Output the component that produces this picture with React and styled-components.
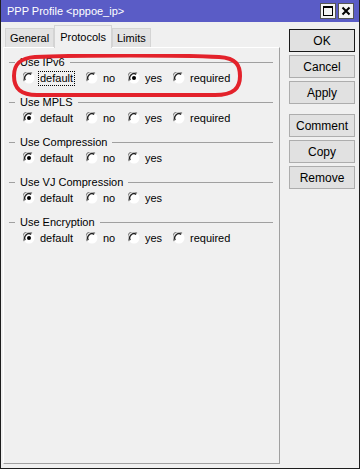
import React from 'react';
import styled, { createGlobalStyle } from 'styled-components';

const GlobalStyle = createGlobalStyle`
  html, body {
    margin: 0;
    padding: 0;
    background: #ffffff;
  }
  body {
    font-family: "Liberation Sans", Arial, sans-serif;
    font-size: 11px;
    color: #000;
  }
`;

const Desktop = styled.div`
  position: relative;
  width: 362px;
  height: 472px;
  overflow: hidden;
  background: #ffffff;
`;

const Window = styled.div`
  width: 360px;
  height: 469px;
  box-sizing: border-box;
  border: 1px solid #1e1e1e;
  border-top: none;
  display: flex;
  flex-direction: column;
  background: #f0f0f0;
`;

const TitleBar = styled.div`
  height: 22px;
  flex: none;
  background: #5a5cc6;
  display: flex;
  align-items: center;
  padding: 0 5px 0 6px;
  color: #ffffff;
  font-size: 11px;
`;

const TitleText = styled.span`
  flex: 1;
`;

const TitleButton = styled.div`
  width: 14px;
  height: 14px;
  margin-left: 2px;
  background: #f4f4f4;
  border: 1px solid #555;
  display: flex;
  align-items: center;
  justify-content: center;
`;

const Body = styled.div`
  flex: 1;
  display: flex;
  padding: 2px 3px 4px 2px;
  gap: 9px;
`;

const LeftColumn = styled.div`
  width: 277px;
  display: flex;
  flex-direction: column;
`;

const TabRow = styled.div`
  display: flex;
  align-items: flex-end;
  height: 23px;
  padding-left: 2px;
`;

const Tab = styled.div`
  height: ${(p) => (p.$active ? '23px' : '19px')};
  box-sizing: border-box;
  padding: 0 ${(p) => (p.$active ? '5px' : '4px')};
  display: flex;
  align-items: center;
  background: ${(p) => (p.$active ? '#f0f0f0' : '#e3e3e3')};
  border: 1px solid #d4d4d4;
  border-bottom: none;
  margin-bottom: ${(p) => (p.$active ? '-1px' : '0')};
  position: relative;
  z-index: ${(p) => (p.$active ? 1 : 0)};
  font-size: 11px;
`;

const Panel = styled.div`
  position: relative;
  flex: 1;
  border: 1px solid #ffffff;
  border-right-color: #a0a0a0;
  border-bottom-color: #a0a0a0;
  padding: 7px 6px 0 5px;
  display: flex;
  flex-direction: column;
  gap: 8px;
`;

const Group = styled.div`
  display: flex;
  flex-direction: column;
`;

const Legend = styled.div`
  display: flex;
  align-items: center;
  gap: 5px;
  height: 14px;
  font-size: 11px;
  &::before {
    content: '';
    width: 6px;
    height: 1px;
    background: #a0a0a0;
  }
  &::after {
    content: '';
    flex: 1;
    height: 1px;
    background: #a0a0a0;
  }
`;

const RadioRow = styled.div`
  display: flex;
  align-items: center;
  height: 18px;
  padding-left: 14px;
`;

const RadioItem = styled.label`
  display: flex;
  align-items: center;
  flex: none;
  width: ${(p) => p.$w}px;
  gap: 4px;
  font-size: 11px;
  svg {
    flex: none;
  }
`;

const RadioText = styled.span`
  padding: 0 1px;
  outline: ${(p) => (p.$focus ? '1px dotted #000' : 'none')};
  line-height: 13px;
`;

const ButtonColumn = styled.div`
  width: 66px;
  display: flex;
  flex-direction: column;
  gap: 3px;
  padding-top: 5px;
`;

const Button = styled.div`
  height: 23px;
  box-sizing: border-box;
  display: flex;
  align-items: center;
  justify-content: center;
  background: #e1e1e1;
  border: 1px solid ${(p) => (p.$default ? '#1a1a1a' : '#adadad')};
  font-size: 12px;
  margin-top: ${(p) => (p.$gapBefore ? '7px' : '0')};
`;

const Highlight = styled.svg`
  position: absolute;
  left: 7px;
  top: 6px;
  pointer-events: none;
`;

const Radio = ({ checked }) => (
  <svg width="12" height="12" viewBox="0 0 12 12">
    <circle cx="6" cy="6" r="5.5" fill="#ffffff" />
    <path d="M1.3 9 A5.4 5.4 0 0 1 9 1.3" stroke="#8a8a8a" strokeWidth="1.2" fill="none" />
    <path d="M2.3 8.2 A4.3 4.3 0 0 1 8.2 2.3" stroke="#222" strokeWidth="1.4" fill="none" />
    {checked && <circle cx="6" cy="6" r="2" fill="#000" />}
  </svg>
);

const widths = [63, 42, 45, 60];

const groups = [
  { label: 'Use IPv6', options: ['default', 'no', 'yes', 'required'], value: 'yes', focus: 'default' },
  { label: 'Use MPLS', options: ['default', 'no', 'yes', 'required'], value: 'default' },
  { label: 'Use Compression', options: ['default', 'no', 'yes'], value: 'default' },
  { label: 'Use VJ Compression', options: ['default', 'no', 'yes'], value: 'default' },
  { label: 'Use Encryption', options: ['default', 'no', 'yes', 'required'], value: 'default' },
];

const App = () => (
  <Desktop>
    <GlobalStyle />
    <Window>
      <TitleBar>
        <TitleText>PPP Profile &lt;pppoe_ip&gt;</TitleText>
        <TitleButton>
          <svg width="10" height="10" viewBox="0 0 10 10">
            <rect x="0.5" y="0.5" width="9" height="9" fill="none" stroke="#000" />
            <line x1="0" y1="1.5" x2="10" y2="1.5" stroke="#000" />
          </svg>
        </TitleButton>
        <TitleButton>
          <svg width="10" height="10" viewBox="0 0 10 10">
            <path d="M1.5 1.5 L8.5 8.5 M8.5 1.5 L1.5 8.5" stroke="#000" strokeWidth="2" />
          </svg>
        </TitleButton>
      </TitleBar>
      <Body>
        <LeftColumn>
          <TabRow>
            <Tab>General</Tab>
            <Tab $active>Protocols</Tab>
            <Tab>Limits</Tab>
          </TabRow>
          <Panel>
            {groups.map((g) => (
              <Group key={g.label}>
                <Legend>{g.label}</Legend>
                <RadioRow>
                  {g.options.map((o, i) => (
                    <RadioItem key={o} $w={widths[i]}>
                      <Radio checked={g.value === o} />
                      <RadioText $focus={g.focus === o}>{o}</RadioText>
                    </RadioItem>
                  ))}
                </RadioRow>
              </Group>
            ))}
            <Highlight width="232" height="44" viewBox="0 0 232 44">
              <path
                d="M24 3 C70 1 170 1 208 3 C226 4 229 12 229 22 C229 34 223 41 204 41 L26 41 C9 41 3 34 3 22 C3 10 9 4 24 3 Z"
                fill="none"
                stroke="#e3222b"
                strokeWidth="4"
              />
            </Highlight>
          </Panel>
        </LeftColumn>
        <ButtonColumn>
          <Button $default>OK</Button>
          <Button>Cancel</Button>
          <Button>Apply</Button>
          <Button $gapBefore>Comment</Button>
          <Button>Copy</Button>
          <Button>Remove</Button>
        </ButtonColumn>
      </Body>
    </Window>
  </Desktop>
);

export default App;
